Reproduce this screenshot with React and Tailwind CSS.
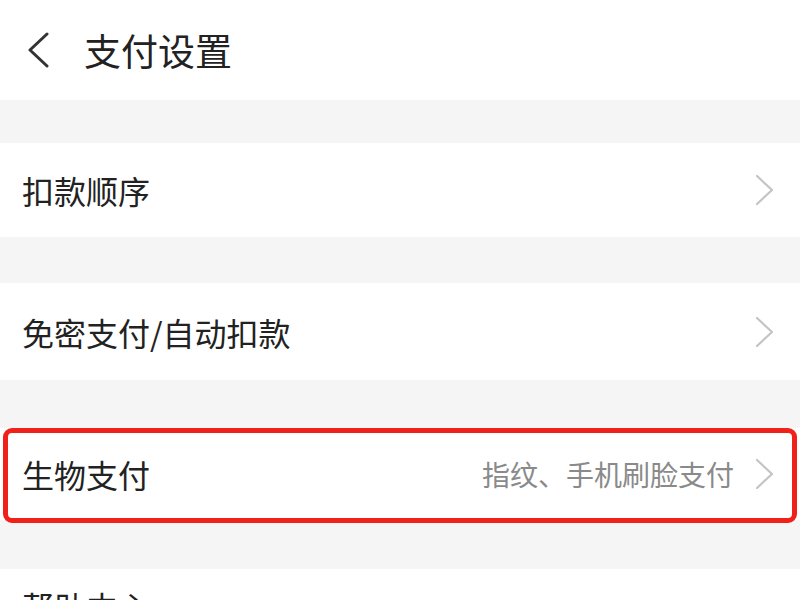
const Chevron = () => (
  <svg className="w-[22px] h-[32px]" viewBox="0 0 22 32" fill="none" stroke="#c4c4c4" strokeWidth="2.2" strokeLinecap="round" strokeLinejoin="round">
    <path d="M3 2 L18 16 L3 30" />
  </svg>
);

const Row = ({ label, extra }) => (
  <div className="flex items-center bg-white pl-[22px] pr-[24px] h-full">
    <span className="text-[32px] text-[#222] leading-none">{label}</span>
    <div className="ml-auto flex items-center gap-[20px]">
      {extra && <span className="text-[28px] text-[#8a8a8a] leading-none">{extra}</span>}
      <Chevron />
    </div>
  </div>
);

export default function App() {
  return (
    <div
      className="w-[800px] h-[600px] overflow-hidden bg-[#f5f5f5]"
      style={{ fontFamily: '"Noto Sans CJK SC", "Noto Sans", sans-serif' }}
    >
      {/* Header */}
      <div className="h-[100px] bg-white flex items-center pl-[26px]">
        <svg className="w-[24px] h-[36px]" viewBox="0 0 24 36" fill="none" stroke="#333" strokeWidth="3" strokeLinecap="round" strokeLinejoin="round">
          <path d="M21 2 L4 18 L21 34" />
        </svg>
        <span className="ml-[34px] text-[37px] text-[#222] leading-none">支付设置</span>
      </div>

      <div className="mt-[43px] h-[94px]">
        <Row label="扣款顺序" />
      </div>

      <div className="mt-[46px] h-[97px]">
        <Row label="免密支付/自动扣款" />
      </div>

      <div className="mt-[48px] h-[92px] relative">
        <Row label="生物支付" extra="指纹、手机刷脸支付" />
        <div className="absolute left-[3px] right-[3px] top-0 -bottom-[3px] border-[5px] border-[#f0201a] rounded-[9px]"></div>
      </div>

      <div className="mt-[49px] h-[95px] bg-white flex items-start pl-[22px] pt-[21px]">
        <span className="text-[32px] text-[#222] leading-none">帮助中心</span>
      </div>
    </div>
  );
}
